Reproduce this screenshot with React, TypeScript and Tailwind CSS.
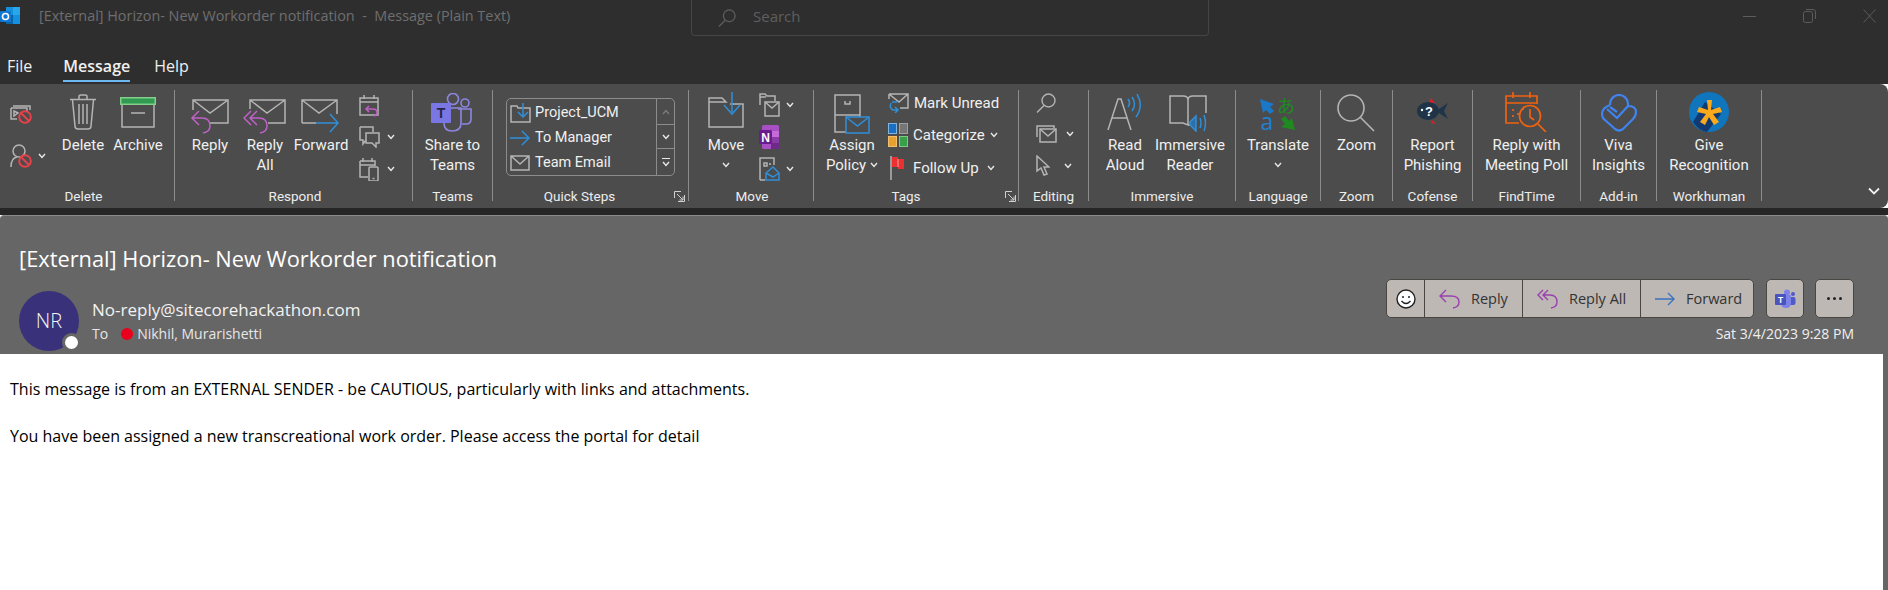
import React from 'react';

const GREY = '#b4b4b4';
const BLUE = '#2f8fd8';
const PURPLE = '#c060c8';
const RED = '#e8404a';

type IconProps = { w: number; h: number; children: React.ReactNode; stroke?: string; sw?: number };

function Ic({ w, h, children, stroke = GREY, sw = 1.5 }: IconProps) {
  return (
    <svg width={w} height={h} viewBox={`0 0 ${w} ${h}`} fill="none" stroke={stroke} strokeWidth={sw} className="block shrink-0">
      {children}
    </svg>
  );
}

function Chevron({ className = '' }: { className?: string }) {
  return (
    <svg width="8" height="6" viewBox="0 0 8 6" fill="none" stroke="#e8e8e8" strokeWidth="1.4" className={`shrink-0 ${className}`}>
      <path d="M1 1 L4 4.5 L7 1" />
    </svg>
  );
}

function Launcher() {
  return (
    <svg width="11" height="11" viewBox="0 0 11 11" fill="none" stroke="#d0d0d0" strokeWidth="1">
      <path d="M10.5 4 V10.5 H4 M0.5 7 V0.5 H7 M3 3 L9 9 M9 5.5 V9 H5.5" />
    </svg>
  );
}

const Delete = () => (
  <Ic w={28} h={36}>
    <path d="M1 5.5 H27 M10 5 V2.5 Q10 1 12 1 H16 Q18 1 18 2.5 V5 M3.5 6 L6 32 Q6 35 9 35 H19 Q22 35 22 32 L24.5 6 M10 10 V30 M14 10 V30 M18 10 V30" />
  </Ic>
);

const Archive = () => (
  <Ic w={36} h={31}>
    <rect x="0.75" y="0.75" width="34.5" height="6.5" fill="#2f9a50" stroke="#84cf8c" />
    <path d="M2 8 V30 H34 V8 M11 16 H25" />
  </Ic>
);

const Reply = () => (
  <Ic w={40} h={36}>
    <path d="M3 11 V1 H38 V24 H20 M3 1 L20 14 L38 1" />
    <path d="M9 12 L2 19 L9 26 M2 19 H12 Q20 19 20 27 Q20 33 13 34" stroke={PURPLE} sw={1.7} />
  </Ic>
);

const ReplyAll = () => (
  <Ic w={44} h={36}>
    <path d="M7 10 V1 H42 V24 H25 M7 1 L24 14 L42 1" />
    <path d="M8 12 L1 19 L8 26 M14 12 L7 19 L14 26 M7 19 H16 Q24 19 24 27 Q24 33 17 34" stroke={PURPLE} sw={1.7} />
  </Ic>
);

const Forward = () => (
  <Ic w={40} h={34}>
    <path d="M1 24 V1 H36 V15 M1 24 H15 M1 1 L18 14 L36 1" />
    <path d="M15 24 H37 M29 15 L37 24 L29 33" stroke={BLUE} sw={1.7} />
  </Ic>
);

const CalReply = () => (
  <Ic w={21} h={24}>
    <path d="M1 5 H19 V22 H1 Z M1 9 H19 M5 2 V6 M15 2 V6" />
    <path d="M10 13 L7 16 L10 19 M7 16 H14 Q18 16 18 20 Q18 22 15 23" stroke={PURPLE} />
  </Ic>
);

const Chat = () => (
  <Ic w={21} h={22}>
    <path d="M1 1 H14 V6 M1 1 V14 H4 V18 L7 14" />
    <path d="M7 7 H20 V17 H17 V21 L13 17 H7 Z" />
  </Ic>
);

const CalPhone = () => (
  <Ic w={21} h={24}>
    <path d="M1 4 H16 V9 M1 4 V20 H9 M1 8 H16 M4 1 V5 M13 1 V5" />
    <rect x="10" y="10" width="9" height="14" rx="1" />
    <path d="M13.5 21.5 H15.5" />
  </Ic>
);

const Ignore = () => (
  <Ic w={22} h={19}>
    <path d="M3 1 H20 V5 M1 3 V14 H7 M1 3 H17 V6" />
    <path d="M4 6 V11 L8 8 Z" />
    <circle cx="15" cy="12" r="5.8" stroke={RED} strokeWidth="2" />
    <path d="M11 8 L19 16" stroke={RED} strokeWidth="2" />
  </Ic>
);

const BlockUser = () => (
  <Ic w={22} h={24}>
    <circle cx="9" cy="7" r="6" />
    <path d="M1 23 Q1 14 7 13" />
    <circle cx="15" cy="17" r="5.8" stroke={RED} strokeWidth="2" />
    <path d="M11 13 L19 21" stroke={RED} strokeWidth="2" />
  </Ic>
);

const TeamsIcon = () => (
  <svg width="42" height="40" viewBox="0 0 42 40" className="block shrink-0">
    <circle cx="22" cy="6" r="5.5" fill="none" stroke="#8c86e0" strokeWidth="1.6" />
    <circle cx="34" cy="10" r="4" fill="none" stroke="#8c86e0" strokeWidth="1.6" />
    <path d="M27 16 H40 V26 Q40 31 35 31 H31" fill="none" stroke="#8c86e0" strokeWidth="1.6" />
    <path d="M13 15 H30 V30 Q30 38 21 38 Q13 38 13 30 Z" fill="none" stroke="#8c86e0" strokeWidth="1.6" />
    <rect x="0" y="10" width="20" height="20" rx="1" fill="#7a76e4" />
    <text x="10" y="25" textAnchor="middle" fill="#26264a" fontSize="14" fontWeight="700" fontFamily="Liberation Sans">T</text>
  </svg>
);

const TeamsSmall = () => (
  <svg width="21" height="20" viewBox="0 0 21 20" className="block shrink-0">
    <circle cx="12" cy="3.5" r="3" fill="#7b83eb" />
    <circle cx="18" cy="5" r="2" fill="#5059c9" />
    <rect x="14" y="8" width="6.5" height="8" rx="2" fill="#5059c9" />
    <path d="M6 6 H16 V14 Q16 19 11 19 Q6 19 6 14 Z" fill="#7b83eb" />
    <rect x="0" y="5" width="11" height="11" rx="1" fill="#4b53bc" />
    <text x="5.5" y="13.5" textAnchor="middle" fill="#fff" fontSize="8.5" fontWeight="700" fontFamily="Liberation Sans">T</text>
  </svg>
);

const MoveIcon = () => (
  <Ic w={36} h={36}>
    <path d="M1 10 V35 H35 V12 H22 M1 10 V6 H14 L18 10 H1" />
    <path d="M24 0 V20 M16 13 L24 22 L32 13" stroke={BLUE} />
  </Ic>
);

const FolderMail = () => (
  <Ic w={21} h={24}>
    <path d="M1 12 V1 H6 L8 3 H16 V8 M1 4 H7" />
    <rect x="6" y="9" width="14" height="14" />
    <path d="M6 9 L13 15 L20 9" />
  </Ic>
);

const OneNote = () => (
  <svg width="20" height="24" viewBox="0 0 20 24" className="block shrink-0">
    <rect x="3" y="0" width="17" height="24" rx="1.5" fill="#a84fc4" />
    <rect x="12" y="6" width="8" height="6" fill="#c56ad8" />
    <rect x="12" y="12" width="8" height="6" fill="#8b3aa6" />
    <rect x="12" y="18" width="8" height="6" fill="#6d2a88" />
    <rect x="0" y="5" width="13" height="14" rx="1.5" fill="#6a1b8e" />
    <text x="6.5" y="16.5" textAnchor="middle" fill="#fff" fontSize="12" fontWeight="700" fontFamily="Liberation Sans">N</text>
  </svg>
);

const MailRule = () => (
  <Ic w={21} h={24}>
    <path d="M1 23 V1 H15 V8 M1 23 H6" />
    <path d="M5 6 H8 V9 H5 Z M10 7 H12" />
    <path d="M7 16 L14 10 L20 16 V23 H7 Z M7 16 L14 20 L20 16" stroke={BLUE} />
  </Ic>
);

const AssignPolicy = () => (
  <svg width="36" height="40" viewBox="0 0 36 40" fill="none" stroke={GREY} strokeWidth="1.5" className="block shrink-0">
    <path d="M1 21 V1 H26 V23 M1 21 H26 M1 21 V38 H12 M11 7 V10 H16 V7" />
    <rect x="12" y="23" width="23" height="16" stroke={BLUE} />
    <path d="M12 23 L23.5 32 L35 23" stroke={BLUE} />
  </svg>
);

const MarkUnread = () => (
  <Ic w={21} h={20}>
    <path d="M5 1 H20 V15 H12 M1 1 H20 M1 1 V6 M1 1 L11 9 L20 1" />
    <path d="M3 10 Q1 15 5 17 H10 M7 14 L10 17 L7 20 M9 9 L4 9" stroke={BLUE} />
  </Ic>
);

const Categorize = () => (
  <svg width="20" height="24" viewBox="0 0 20 24" className="block shrink-0">
    <rect x="0.5" y="0.5" width="8" height="10" fill="#1a6fc4" stroke="#7fb4e0" />
    <rect x="11.5" y="0.5" width="8" height="10" fill="#767676" stroke="#a0a0a0" />
    <rect x="0.5" y="13.5" width="8" height="10" fill="#e8a030" stroke="#f0c070" />
    <rect x="11.5" y="13.5" width="8" height="10" fill="#38a048" stroke="#80c888" />
  </svg>
);

const Flag = () => (
  <svg width="15" height="24" viewBox="0 0 15 24" className="block shrink-0">
    <path d="M1 0 V24" stroke="#b4b4b4" strokeWidth="1.5" />
    <path d="M2 1 H8 V3 H14 V13 H8 V11 H2 Z" fill="#ea3030" />
    <path d="M8 3 V11" stroke="#f8a0a0" />
  </svg>
);

const Search = ({ s = 20, color = GREY }: { s?: number; color?: string }) => (
  <svg width={s} height={s} viewBox="0 0 20 20" fill="none" stroke={color} strokeWidth="1.4" className="block shrink-0">
    <circle cx="12.5" cy="7.5" r="6.5" />
    <path d="M8 12.5 L1 19.5" />
  </svg>
);

const MailFrame = () => (
  <Ic w={21} h={18}>
    <path d="M1 12 V1 H18 V3" />
    <rect x="4" y="4" width="16" height="13" />
    <path d="M4 4 L12 11 L20 4" />
  </Ic>
);

const Cursor = () => (
  <Ic w={14} h={21}>
    <path d="M1 1 V16 L5 13 L8 20 L11 19 L8 12 L13 12 Z" />
  </Ic>
);

const ReadAloud = () => (
  <Ic w={36} h={36}>
    <path d="M1 36 L11 5 L14 5 L24 36 M5 24 H20" />
    <path d="M21 13 Q24 9 21 5 M25 17 Q30 10 25 3 M29 23 Q37 12 30 0" stroke={BLUE} />
  </Ic>
);

const ImmersiveIcon = () => (
  <Ic w={42} h={37}>
    <path d="M1 1 H14 Q19 1 19 5 V30 L14 28 H1 Z M19 5 Q19 1 24 1 H37 V18" />
    <path d="M19 30 H21" />
    <path d="M21 27 L27 21 V36 L21 30 Z" fill="#2f6fa8" stroke={BLUE} />
    <path d="M31 23 Q33 28 31 33 M35 20 Q38 28 35 36" stroke={BLUE} />
  </Ic>
);

const Translate = () => (
  <svg width="36" height="46" viewBox="0 0 36 46" className="block shrink-0">
    <g transform="translate(0 4)">
      <path d="M0 4 L14 9 L10 12 L14 16 L10 19 L6 15 L3 18 Z" fill="#1a78c8" />
      <text x="7" y="35" textAnchor="middle" fill="#1f80d0" fontSize="23" fontFamily="Open Sans">a</text>
      <text x="26" y="18" textAnchor="middle" fill="#1f8a1f" fontSize="18" fontFamily="Noto Sans CJK JP">あ</text>
      <path d="M35 35 L21 32 L25 29 L21 24 L25 21 L29 26 L32 23 Z" fill="#1f8a1f" />
    </g>
  </svg>
);

const ZoomIcon = () => (
  <Ic w={38} h={38} sw={1.6}>
    <circle cx="14" cy="14" r="13" />
    <path d="M23 23 L37 37" />
  </Ic>
);

const Fish = () => (
  <svg width="31" height="28" viewBox="0 0 31 28" className="block shrink-0">
    <path d="M14 1 L18 6 L12 6 Z" fill="#d8202c" />
    <path d="M15 23 L19 27 L14 26 Z" fill="#d8202c" />
    <ellipse cx="11" cy="14" rx="11" ry="9" fill="#1f3448" />
    <path d="M19 14 L31 6 L27 14 L31 22 Z" fill="#1f3448" />
    <circle cx="5" cy="13" r="1.2" fill="#fff" />
    <text x="12" y="19" textAnchor="middle" fill="#fff" fontSize="13" fontWeight="700" fontFamily="Liberation Sans">?</text>
  </svg>
);

const Poll = () => (
  <Ic w={42} h={40} stroke="#f0620f" sw={1.7}>
    <path d="M14 31 H1 V4 H32 V12 M1 11 H32 M8 0 V6 M25 0 V6" />
    <path d="M8 17 V19 M8 23 V25 M13 21 V23 M18 16 V18" />
    <circle cx="25" cy="24" r="10.5" />
    <path d="M25 17 V25 L29 28 M33 32 L41 40" />
  </Ic>
);

const Viva = () => (
  <Ic w={36} h={38} stroke="#3f84f0" sw={2.2}>
    <path d="M9 11 V10 A9 9 0 0 1 27 10 V12 M9 11 Q1 14 1 20 Q1 24 4 26 L14 35 Q18 38 22 35 L32 25 Q35 22 35 18 Q35 12 27 12 M27 12 L16 24 L6 15 M9 13 L16 18" />
  </Ic>
);

const Recognition = () => (
  <svg width="40" height="40" viewBox="0 0 40 40" className="block shrink-0">
    <circle cx="20" cy="20" r="20" fill="#0f75bc" />
    <path d="M4 30 L16 10 L32 22 L18 40 Q9 38 4 30 Z" fill="#123a72" />
    <path d="M18 8 H23 L22 18 L31 15 L33 20 L24 22 L30 30 L25 33 L20 25 L16 33 L11 30 L17 22 L8 20 L10 15 L19 18 Z" fill="#f8a91c" />
  </svg>
);

function Large({ icon, lines, w, chev, top }: { icon: React.ReactNode; lines: string[]; w?: string; chev?: boolean; top: string }) {
  return (
    <div className={`flex flex-col items-center ${w ?? ''}`}>
      <div className={`h-[45px] flex items-start justify-center ${top}`}>{icon}</div>
      {lines.map((l, i) => (
        <div key={i} className="leading-[20px] whitespace-nowrap flex items-center gap-[4px]">
          {l}
          {chev && lines.length > 1 && i === lines.length - 1 && <Chevron />}
        </div>
      ))}
      {chev && lines.length === 1 && (
        <div className="h-[20px] flex items-center">
          <Chevron />
        </div>
      )}
    </div>
  );
}

function Group({ w, label, labelShift, children }: { w: string; label: string; labelShift?: string; children: React.ReactNode }) {
  return (
    <div className={`${w} h-[111px] shrink-0 flex flex-col border-r border-[#8c8c8c]`}>
      <div className="h-[98px] flex">{children}</div>
      <div className={`h-[13px] text-center leading-[16px] text-[13.5px] text-[#ececec] whitespace-nowrap ${labelShift ?? ''}`}>{label}</div>
    </div>
  );
}

function SmallCol({ children, className }: { children: React.ReactNode; className: string }) {
  return <div className={`flex flex-col ${className}`}>{children}</div>;
}

function QuickStep({ icon, label }: { icon: React.ReactNode; label: string }) {
  return (
    <div className="h-[24px] flex items-center pl-[3px]">
      <div className="w-[25px] flex justify-start">{icon}</div>
      <span className="text-[14.5px]">{label}</span>
    </div>
  );
}

export default function App() {
  return (
    <div className="w-[1888px] h-[590px] overflow-hidden bg-white flex flex-col font-['Open_Sans',sans-serif] text-[#f0f0f0]">
      {/* title bar */}
      <div className="h-[50px] shrink-0 bg-[#2e2e2e] flex items-start relative">
        <svg width="22" height="20" viewBox="0 0 22 20" className="mt-[6px] shrink-0">
          <rect x="6" y="1" width="14" height="17" fill="#1490df" />
          <rect x="13" y="1" width="7" height="8" fill="#28a8ea" />
          <rect x="6" y="9" width="7" height="9" fill="#0a64a8" />
          <rect x="0" y="5" width="11" height="11" rx="1" fill="#0f78d4" />
          <circle cx="5.5" cy="10.5" r="3" fill="none" stroke="#fff" strokeWidth="1.6" />
        </svg>
        <div className="ml-[17px] mt-[6px] text-[14.4px] leading-[20px] text-[#6e6e6e] whitespace-pre">[External] Horizon- New Workorder notification  -  Message (Plain Text)</div>
        <div className="absolute left-[691px] top-0 w-[518px] h-[36px] rounded-b-[4px] border border-t-0 border-[#454545] flex items-center pl-[26px] gap-[17px]">
          <Search s={18} color="#5e5e5e" />
          <span className="text-[15px] text-[#5e5e5e] -mt-[3px]">Search</span>
        </div>
        <div className="ml-auto flex items-center h-[32px] pr-[12px] gap-[47px]">
          <div className="w-[13px] h-px bg-[#5c5c5c]" />
          <svg width="13" height="14" viewBox="0 0 13 14" fill="none" stroke="#5c5c5c" strokeWidth="1">
            <rect x="0.5" y="2.5" width="9" height="11" rx="2" />
            <path d="M3 0.5 H10 Q12.5 0.5 12.5 3 V10" />
          </svg>
          <svg width="13" height="14" viewBox="0 0 13 14" fill="none" stroke="#5c5c5c" strokeWidth="1">
            <path d="M0.5 0.5 L12.5 13.5 M12.5 0.5 L0.5 13.5" />
          </svg>
        </div>
      </div>

      {/* tabs */}
      <div className="h-[34px] shrink-0 bg-[#2e2e2e] flex text-[16px] leading-[32px] pl-[7px]">
        <span>File</span>
        <span className="ml-[31px] h-[32px] border-b-[2px] border-[#6cb8f0] font-semibold">Message</span>
        <span className="ml-[24px]">Help</span>
      </div>

      {/* ribbon */}
      <div className="h-[124px] shrink-0 bg-[#4c4c4c] rounded-r-[8px] pt-[6px] flex relative font-['Roboto',sans-serif] text-[15px] leading-[20px] text-[#f0f0f0]">
        <Group w="w-[175px]" label="Delete" labelShift="pr-[7px]">
          <SmallCol className="w-[53px] pl-[10px] pt-[15px] gap-[20px]">
            <Ignore />
            <div className="flex items-center gap-[6px]">
              <BlockUser />
              <Chevron />
            </div>
          </SmallCol>
          <Large icon={<Delete />} lines={['Delete']} w="w-[60px]" top="pt-[4px]" />
          <Large icon={<Archive />} lines={['Archive']} w="w-[50px]" top="pt-[7px]" />
        </Group>

        <Group w="w-[238px]" label="Respond" labelShift="pl-[3px]">
          <div className="w-[8px]" />
          <Large icon={<Reply />} lines={['Reply']} w="w-[54px]" top="pt-[9px]" />
          <Large icon={<ReplyAll />} lines={['Reply', 'All']} w="w-[56px]" top="pt-[9px]" />
          <Large icon={<Forward />} lines={['Forward']} w="w-[56px]" top="pt-[9px]" />
          <SmallCol className="pl-[10px] pt-[3px] gap-[9px]">
            <CalReply />
            <div className="flex items-center gap-[7px]">
              <Chat />
              <Chevron />
            </div>
            <div className="flex items-center gap-[7px]">
              <CalPhone />
              <Chevron />
            </div>
          </SmallCol>
        </Group>

        <Group w="w-[80px]" label="Teams">
          <div className="flex-1 flex justify-center">
            <Large icon={<TeamsIcon />} lines={['Share to', 'Teams']} top="pt-[3px]" />
          </div>
        </Group>

        <Group w="w-[196px]" label="Quick Steps" labelShift="pr-[22px]">
          <div className="ml-[13px] mt-[8px] w-[169px] h-[78px] border border-[#8c8c8c] rounded-[5px] flex">
            <div className="flex-1 flex flex-col justify-center gap-[1px] pt-[1px]">
              <QuickStep
                label="Project_UCM"
                icon={
                  <Ic w={21} h={20}>
                    <path d="M1 19 V3 H7 L8 5 H20 V19 Z" />
                    <path d="M13 0 V13 M8 9 L13 14 L18 9" stroke={BLUE} />
                  </Ic>
                }
              />
              <QuickStep
                label="To Manager"
                icon={
                  <Ic w={20} h={16} stroke={BLUE}>
                    <path d="M0 8 H19 M12 1 L19 8 L12 15" />
                  </Ic>
                }
              />
              <QuickStep
                label="Team Email"
                icon={
                  <Ic w={20} h={16}>
                    <path d="M1 1 H19 V15 H1 Z M1 1 L10 9 L19 1" />
                  </Ic>
                }
              />
            </div>
            <div className="w-[18px] border-l border-[#8c8c8c] flex flex-col">
              <div className="h-[25px] flex items-center justify-center opacity-30">
                <svg width="8" height="6" viewBox="0 0 8 6" fill="none" stroke="#e8e8e8" strokeWidth="1.4">
                  <path d="M1 5 L4 1.5 L7 5" />
                </svg>
              </div>
              <div className="h-[25px] border-y border-[#8c8c8c] flex items-center justify-center">
                <Chevron />
              </div>
              <div className="flex-1 flex flex-col items-center justify-center gap-[2px]">
                <div className="w-[8px] h-px bg-[#e8e8e8]" />
                <Chevron />
              </div>
            </div>
          </div>
          <div className="absolute left-[674px] top-[107px]">
            <Launcher />
          </div>
        </Group>

        <Group w="w-[125px]" label="Move" labelShift="pl-[2px]">
          <div className="w-[10px]" />
          <Large icon={<MoveIcon />} lines={['Move']} w="w-[54px]" chev top="pt-[2px]" />
          <SmallCol className="pl-[6px] pt-[3px] gap-[8px]">
            <div className="flex items-center gap-[6px]">
              <FolderMail />
              <Chevron />
            </div>
            <OneNote />
            <div className="flex items-center gap-[6px]">
              <MailRule />
              <Chevron />
            </div>
          </SmallCol>
        </Group>

        <Group w="w-[205px]" label="Tags" labelShift="pr-[20px]">
          <div className="w-[12px]" />
          <Large icon={<AssignPolicy />} lines={['Assign', 'Policy']} w="w-[52px]" chev top="pt-[4px]" />
          <SmallCol className="pl-[10px] pt-[1px] gap-[8px]">
            <div className="flex items-center gap-[5px] h-[24px]">
              <MarkUnread />
              <span>Mark Unread</span>
            </div>
            <div className="flex items-center gap-[5px] h-[24px]">
              <Categorize />
              <span>Categorize</span>
              <Chevron />
            </div>
            <div className="flex items-center gap-[8px] h-[24px] pl-[2px] mt-[1px]">
              <Flag />
              <span>Follow Up</span>
              <Chevron />
            </div>
          </SmallCol>
          <div className="absolute left-[1005px] top-[107px]">
            <Launcher />
          </div>
        </Group>

        <Group w="w-[70px]" label="Editing">
          <SmallCol className="pl-[17px] pt-[3px] gap-[12px]">
            <Search s={20} />
            <div className="flex items-center gap-[9px]">
              <MailFrame />
              <Chevron />
            </div>
            <div className="flex items-center gap-[14px]">
              <Cursor />
              <Chevron />
            </div>
          </SmallCol>
        </Group>

        <Group w="w-[147px]" label="Immersive">
          <div className="w-[6px]" />
          <Large icon={<ReadAloud />} lines={['Read', 'Aloud']} w="w-[60px]" top="pt-[4px]" />
          <Large icon={<ImmersiveIcon />} lines={['Immersive', 'Reader']} w="w-[70px]" top="pt-[5px]" />
        </Group>

        <Group w="w-[85px]" label="Language">
          <div className="flex-1 flex justify-center">
            <Large icon={<Translate />} lines={['Translate']} chev top="pt-[1px]" />
          </div>
        </Group>

        <Group w="w-[72px]" label="Zoom">
          <div className="flex-1 flex justify-center">
            <Large icon={<ZoomIcon />} lines={['Zoom']} top="pt-[4px]" />
          </div>
        </Group>

        <Group w="w-[80px]" label="Cofense">
          <div className="flex-1 flex justify-center">
            <Large icon={<Fish />} lines={['Report', 'Phishing']} top="pt-[7px]" />
          </div>
        </Group>

        <Group w="w-[108px]" label="FindTime">
          <div className="flex-1 flex justify-center">
            <Large icon={<Poll />} lines={['Reply with', 'Meeting Poll']} top="pt-[2px]" />
          </div>
        </Group>

        <Group w="w-[76px]" label="Add-in">
          <div className="flex-1 flex justify-center">
            <Large icon={<Viva />} lines={['Viva', 'Insights']} top="pt-[4px]" />
          </div>
        </Group>

        <Group w="w-[105px]" label="Workhuman">
          <div className="flex-1 flex justify-center">
            <Large icon={<Recognition />} lines={['Give', 'Recognition']} top="pt-[2px]" />
          </div>
        </Group>

        <svg width="12" height="8" viewBox="0 0 12 8" fill="none" stroke="#f0f0f0" strokeWidth="1.8" className="absolute right-[8px] bottom-[13px]">
          <path d="M1 1.5 L6 6.5 L11 1.5" />
        </svg>
      </div>

      <div className="h-[7px] shrink-0 bg-[#262626]" />

      {/* message header */}
      <div className="h-[139px] shrink-0 bg-[#666666] border-t border-[#8a8a8a] rounded-t-[4px] flex flex-col">
        <div className="pl-[19px] pt-[29px] text-[21.8px] leading-[28px] text-white">[External] Horizon- New Workorder notification</div>
        <div className="flex pl-[19px] pr-[34px]">
          <div className="relative w-[60px] h-[60px] mt-[18px] rounded-full bg-[#39327a] flex items-center justify-center text-[20px] font-light text-[#f4f4f4] shrink-0">
            NR
            <div className="absolute right-[-2px] bottom-[-1px] w-[19px] h-[19px] rounded-full bg-white border-[3px] border-[#666666]" />
          </div>
          <div className="ml-[13px] mt-[25px]">
            <div className="text-[17px] leading-[24px] text-[#f2f2f2]">No-reply@sitecorehackathon.com</div>
            <div className="flex items-center text-[14px] leading-[20px] mt-[2px] text-[#e6e6e6]">
              <span>To</span>
              <span className="ml-[13px] w-[12px] h-[12px] rounded-full bg-[#e8001c]" />
              <span className="ml-[4px]">Nikhil, Murarishetti</span>
            </div>
          </div>
          <div className="ml-auto flex flex-col items-end">
            <div className="flex mt-[6px] text-[#333] text-[14.5px]">
              <div className="flex h-[39px] rounded-[5px] border border-[#4a4642] bg-[#bdb8b4]">
                <div className="w-[38px] flex items-center justify-center border-r border-[#4a4642]">
                  <svg width="20" height="20" viewBox="0 0 20 20" fill="#fff" stroke="#222" strokeWidth="1.4">
                    <circle cx="10" cy="10" r="9" />
                    <circle cx="7" cy="8" r="1" fill="#222" stroke="none" />
                    <circle cx="13" cy="8" r="1" fill="#222" stroke="none" />
                    <path d="M5.5 12 Q10 17 14.5 12" fill="none" />
                  </svg>
                </div>
                <div className="w-[98px] flex items-center pl-[14px] gap-[11px] border-r border-[#4a4642]">
                  <svg width="21" height="20" viewBox="0 0 21 20" fill="none" stroke="#9b3fb0" strokeWidth="1.4" className="shrink-0">
                    <path d="M7 1 L1 7 L7 13 M1 7 H12 Q20 7 20 13 Q20 18 14 19" />
                  </svg>
                  Reply
                </div>
                <div className="w-[118px] flex items-center pl-[14px] gap-[11px] border-r border-[#4a4642]">
                  <svg width="21" height="20" viewBox="0 0 21 20" fill="none" stroke="#9b3fb0" strokeWidth="1.4" className="shrink-0">
                    <path d="M6 1 L1 6 L6 11 M11 1 L6 6 L11 11 M6 6 H13 Q20 6 20 13 Q20 18 14 19" />
                  </svg>
                  Reply All
                </div>
                <div className="w-[112px] flex items-center pl-[14px] gap-[11px]">
                  <svg width="20" height="14" viewBox="0 0 20 14" fill="none" stroke="#3a72c0" strokeWidth="1.4" className="shrink-0">
                    <path d="M0 7 H19 M13 1 L19 7 L13 13" />
                  </svg>
                  Forward
                </div>
              </div>
              <div className="ml-[12px] w-[38px] h-[39px] rounded-[5px] border border-[#4a4642] bg-[#bdb8b4] flex items-center justify-center">
                <TeamsSmall />
              </div>
              <div className="ml-[11px] w-[39px] h-[39px] rounded-[5px] border border-[#4a4642] bg-[#bdb8b4] flex items-center justify-center gap-[3px]">
                <span className="w-[3px] h-[3px] rounded-full bg-[#222]" />
                <span className="w-[3px] h-[3px] rounded-full bg-[#222]" />
                <span className="w-[3px] h-[3px] rounded-full bg-[#222]" />
              </div>
            </div>
            <div className="mt-[6px] text-[14px] leading-[20px] text-[#f0f0f0]">Sat 3/4/2023 9:28 PM</div>
          </div>
        </div>
      </div>

      {/* message body */}
      <div className="flex-1 flex">
        <div className="flex-1 bg-white pl-[10px] pt-[25px] text-[16px] leading-[20px] text-black">
          <div>This message is from an EXTERNAL SENDER - be CAUTIOUS, particularly with links and attachments.</div>
          <div className="mt-[27px]">You have been assigned a new transcreational work order. Please access the portal for detail</div>
        </div>
        <div className="w-[5px] bg-[#666666]" />
      </div>
    </div>
  );
}
